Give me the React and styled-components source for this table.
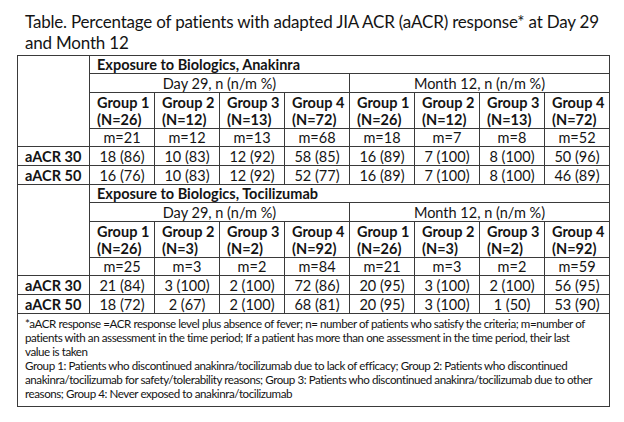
import styled, { createGlobalStyle } from "styled-components";

const Global = createGlobalStyle`
  body {
    margin: 0;
    background: #fff;
    font-family: Lato, "Open Sans", sans-serif;
    color: #141414;
  }
`;

const groupsA = ["26", "12", "13", "72"];
const groupsB = ["26", "3", "2", "92"];

const sections = [
  {
    drug: "Anakinra",
    dayN: groupsA,
    monthN: groupsA,
    dayM: ["21", "12", "13", "68"],
    monthM: ["18", "7", "8", "52"],
    rows: [
      ["aACR 30", "18 (86)", "10 (83)", "12 (92)", "58 (85)", "16 (89)", "7 (100)", "8 (100)", "50 (96)"],
      ["aACR 50", "16 (76)", "10 (83)", "12 (92)", "52 (77)", "16 (89)", "7 (100)", "8 (100)", "46 (89)"],
    ],
  },
  {
    drug: "Tocilizumab",
    dayN: groupsB,
    monthN: groupsB,
    dayM: ["25", "3", "2", "84"],
    monthM: ["21", "3", "2", "59"],
    rows: [
      ["aACR 30", "21 (84)", "3 (100)", "2 (100)", "72 (86)", "20 (95)", "3 (100)", "2 (100)", "56 (95)"],
      ["aACR 50", "18 (72)", "2 (67)", "2 (100)", "68 (81)", "20 (95)", "3 (100)", "1 (50)", "53 (90)"],
    ],
  },
];

function Section({ s }) {
  const ns = [...s.dayN, ...s.monthN];
  const ms = [...s.dayM, ...s.monthM];
  return (
    <>
      <tr>
        <Blank rowSpan={4} />
        <Cell colSpan={8} $bold $left $h={19}>Exposure to Biologics, {s.drug}</Cell>
      </tr>
      <tr>
        <Cell colSpan={4} $h={20}>Day 29, n (n/m %)</Cell>
        <Cell colSpan={4} $h={20}>Month 12, n (n/m %)</Cell>
      </tr>
      <tr>
        {ns.map((n, i) => (
          <Cell key={i} $bold $left $h={37}>
            Group {(i % 4) + 1}
            <br />
            (N={n})
          </Cell>
        ))}
      </tr>
      <tr>
        {ms.map((m, i) => (
          <Cell key={i} $h={18}>m={m}</Cell>
        ))}
      </tr>
      {s.rows.map((r) => (
        <tr key={r[0]}>
          <Cell $bold $left $h={20}>{r[0]}</Cell>
          {r.slice(1).map((v, i) => (
            <Cell key={i} $h={20}>{v}</Cell>
          ))}
        </tr>
      ))}
    </>
  );
}

export default function App() {
  return (
    <Page>
      <Global />
      <Title>
        Table. Percentage of patients with adapted JIA ACR (aACR) response* at Day 29
        <br />
        and Month 12
      </Title>
      <Table>
        <colgroup>
          <col style={{ width: 72 }} />
          {Array.from({ length: 8 }).map((_, i) => (
            <col key={i} style={{ width: 65 }} />
          ))}
        </colgroup>
        <tbody>
          {sections.map((s) => (
            <Section key={s.drug} s={s} />
          ))}
          <tr>
            <Note colSpan={9}>
              *aACR response =ACR response level plus absence of fever; n= number of patients who satisfy the criteria; m=number of
              <br />
              patients with an assessment in the time period; If a patient has more than one assessment in the time period, their last
              <br />
              value is taken
              <br />
              Group 1: Patients who discontinued anakinra/tocilizumab due to lack of efficacy; Group 2: Patients who discontinued
              <br />
              anakinra/tocilizumab for safety/tolerability reasons; Group 3: Patients who discontinued anakinra/tocilizumab due to other
              <br />
              reasons; Group 4: Never exposed to anakinra/tocilizumab
            </Note>
          </tr>
        </tbody>
      </Table>
    </Page>
  );
}

const Page = styled.div`
  width: 624px;
  height: 422px;
  padding: 11px 14px 0 17px;
  box-sizing: border-box;
  background: #fff;
  overflow: hidden;
`;

const Title = styled.div`
  font-size: 17px;
  letter-spacing: -0.2px;
  line-height: 21px;
  padding-left: 8px;
  margin-bottom: 2px;
  white-space: nowrap;
`;

const Table = styled.table`
  border-collapse: collapse;
  table-layout: fixed;
  width: 593px;
  border: 1px solid #3a3a3a;
`;

const Blank = styled.td`
  border: 1px solid #3a3a3a;
  padding: 0;
`;

const Cell = styled.td`
  border: 1px solid #3a3a3a;
  height: ${(p) => p.$h - 1}px;
  padding: 0 0 0 7px;
  box-sizing: border-box;
  font-size: 14.5px;
  line-height: 17px;
  font-weight: ${(p) => (p.$bold ? 700 : 400)};
  text-align: ${(p) => (p.$left ? "left" : "center")};
  padding-right: ${(p) => (p.$left ? 0 : 7)}px;
  white-space: nowrap;
  vertical-align: middle;
`;

const Note = styled.td`
  border: 1px solid #3a3a3a;
  padding: 3px 0 5px 7px;
  font-size: 11.6px;
  letter-spacing: -0.44px;
  line-height: 14px;
  white-space: nowrap;
  overflow: hidden;
`;
